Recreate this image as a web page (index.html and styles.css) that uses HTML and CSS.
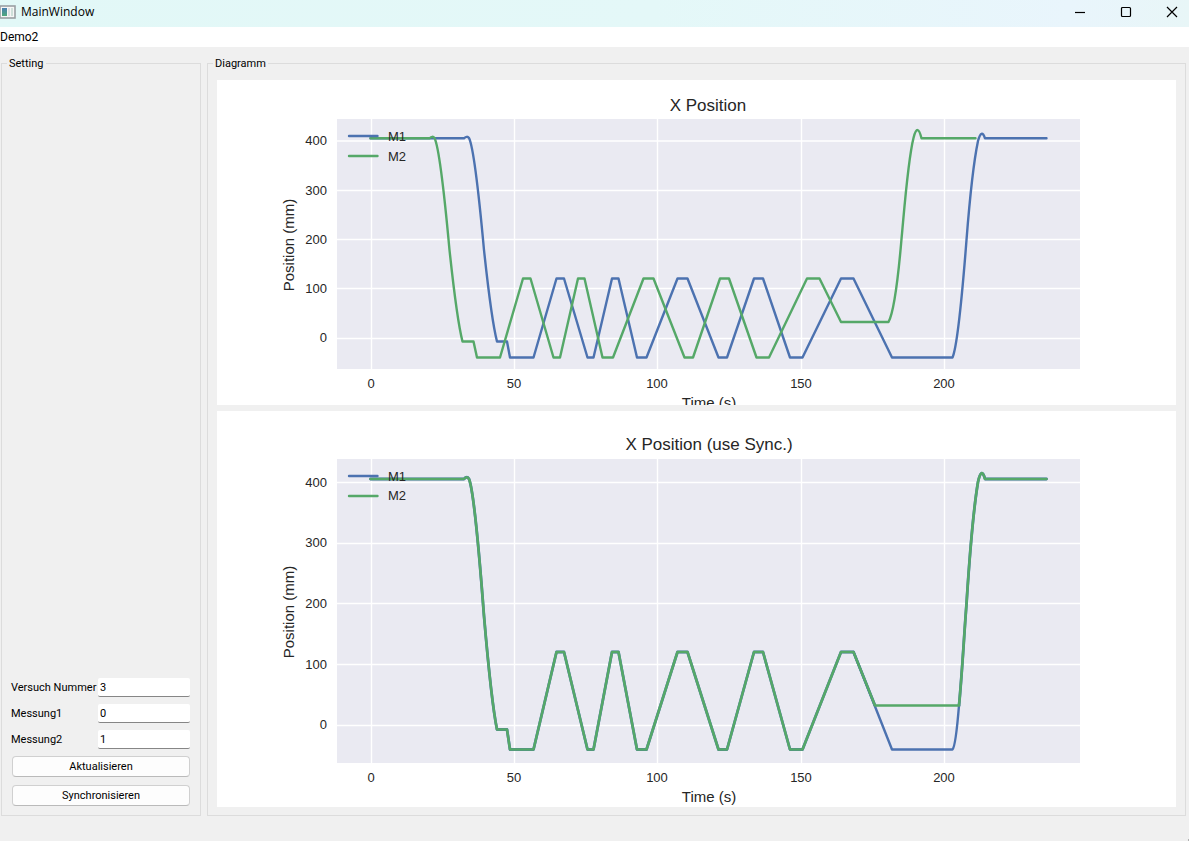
FILE: index.html
```
<!DOCTYPE html>
<html lang="de">
<head>
<meta charset="utf-8">
<title>MainWindow</title>
<link rel="stylesheet" href="styles.css">
</head>
<body>
<header class="titlebar">
  <svg class="app-icon" viewBox="0 0 16 14" aria-hidden="true">
    <defs><linearGradient id="pane" x1="0" y1="0" x2="0" y2="1"><stop offset="0" stop-color="#4a7fb0"/><stop offset="1" stop-color="#4fa87c"/></linearGradient></defs>
    <rect x="0" y="1" width="15" height="12" fill="#f6f6f6" stroke="#9a9fa3" stroke-width="1.6"/>
    <rect x="2" y="3" width="5" height="8" fill="url(#pane)"/>
    <rect x="8" y="3" width="2" height="8" fill="#dcdfe2"/>
    <rect x="11" y="3" width="2" height="8" fill="#cfe0da"/>
  </svg>
  <h1 class="window-title">MainWindow</h1>
  <div class="window-controls">
    <button class="window-button" type="button" aria-label="Minimize"><svg viewBox="0 0 12 12"><path d="M1 6.500H11"/></svg></button>
    <button class="window-button" type="button" aria-label="Maximize"><svg viewBox="0 0 12 12"><rect x="1.500" y="1.500" width="9" height="9" rx="1"/></svg></button>
    <button class="window-button" type="button" aria-label="Close"><svg viewBox="0 0 12 12"><path d="M1 1L11 11M11 1L1 11"/></svg></button>
  </div>
</header>
<nav class="menubar"><a class="menu-item" href="#">Demo2</a></nav>
<main class="workspace">
  <fieldset class="group">
    <legend class="group-title">Setting</legend>
    <form class="settings">
      <div class="fields">
        <label for="versuch">Versuch Nummer</label><input class="field" id="versuch" type="text" value="3">
        <label for="messung1">Messung1</label><input class="field" id="messung1" type="text" value="0">
        <label for="messung2">Messung2</label><input class="field" id="messung2" type="text" value="1">
      </div>
      <button class="action" type="button">Aktualisieren</button>
      <button class="action" type="button">Synchronisieren</button>
    </form>
  </fieldset>
  <fieldset class="group">
    <legend class="group-title">Diagramm</legend>
    <div class="charts">
      <svg class="chart chart-raw" viewBox="217 80 959 325" role="img" aria-label="X Position">
        <rect class="plot" x="337" y="119" width="743" height="250"/>
        <path class="grid" d="M337 141H1080M337 190.500H1080M337 239.500H1080M337 288.500H1080M337 338.500H1080M371.500 119V369M514.500 119V369M657.500 119V369M801.500 119V369M944.500 119V369"/>
        <text class="title" x="708" y="111">X Position</text>
        <g class="tick tick-y"><text x="327" y="145">400</text><text x="327" y="195">300</text><text x="327" y="244">200</text><text x="327" y="293">100</text><text x="327" y="342">0</text></g>
        <g class="tick"><text x="371" y="388">0</text><text x="514" y="388">50</text><text x="657" y="388">100</text><text x="801" y="388">150</text><text x="944" y="388">200</text></g>
        <text class="axis" x="709" y="408">Time (s)</text>
        <text class="axis" transform="translate(294 245) rotate(-90)">Position (mm)</text>
        <path class="line m1" d="M370.500 138.300H464Q467 135.500 469 138C473 146 478.500 190 484 250C487 278 492 322 497 341.500H507L510 357.500H533.500L556.500 278.500H564L587.500 357.500H593.500L612 278.500H618.500L637 357.500H646.500L677.500 278.500H687.500L718.500 357.500H727L754 278.500H763L790 357.500H802.500L841 278.500H853.500L892 357.500H952.500C958 345 963 285 966.500 240C970 195 973 165 978 141Q981.500 128 985 138.300H1046.500"/>
        <path class="line m2" d="M370.500 138.300H429.500Q432.500 135.500 434.500 138C438.500 146 444 190 449.500 250C452.500 278 457.500 322 462.500 341.500H473.500L477 357.500H500L523 278.500H530.500L553.500 357.500H560L578 278.500H584.500L602.500 357.500H613L643.500 278.500H653.500L684.500 357.500H693L720 278.500H729L756.500 357.500H769L807 278.500H819.500L841 322H888.500C894 312 898 280 901.500 239C904.500 207 908 160 913.500 138Q917.500 122 921.500 138.300H975.500"/>
        <path class="line m1" d="M349 136H377.500"/><path class="line m2" d="M349 156H377.500"/>
        <g class="legend"><text x="388" y="141">M1</text><text x="388" y="161">M2</text></g>
      </svg>
      <svg class="chart chart-sync" viewBox="217 411 959 396" role="img" aria-label="X Position (use Sync.)">
        <rect class="plot" x="337" y="459" width="743" height="304"/>
        <path class="grid" d="M337 482.500H1080M337 543.500H1080M337 603.500H1080M337 664.500H1080M337 725.500H1080M371.500 459V763M514.500 459V763M657.500 459V763M801.500 459V763M944.500 459V763"/>
        <text class="title" x="709" y="450">X Position (use Sync.)</text>
        <g class="tick tick-y"><text x="327" y="487">400</text><text x="327" y="547">300</text><text x="327" y="608">200</text><text x="327" y="669">100</text><text x="327" y="729">0</text></g>
        <g class="tick"><text x="371" y="782">0</text><text x="514" y="782">50</text><text x="657" y="782">100</text><text x="801" y="782">150</text><text x="944" y="782">200</text></g>
        <text class="axis" x="709" y="802">Time (s)</text>
        <text class="axis" transform="translate(294 612) rotate(-90)">Position (mm)</text>
        <path class="line m1" d="M853.500 652L892 749.500H952.500C955 747 957 730 959 705.500"/>
        <path class="line m1 overlap" d="M370.500 479H464Q467 475.500 469 479C473 489 478.500 543 484 616C487 651 492 705 497 729.500H507L510 749.500H533.500L556.500 652H564L587.500 749.500H593.500L612 652H618.500L637 749.500H646.500L677.500 652H687.500L718.500 749.500H727L754 652H763L790 749.500H802.500L841 652H853.500L875 705.500M959 705.500C962 675 964 636 966.500 604C970 549 973 512 978 482Q981.500 466 985 479H1046.500"/>
        <path class="line m2 sync" d="M370.500 479H464Q467 475.500 469 479C473 489 478.500 543 484 616C487 651 492 705 497 729.500H507L510 749.500H533.500L556.500 652H564L587.500 749.500H593.500L612 652H618.500L637 749.500H646.500L677.500 652H687.500L718.500 749.500H727L754 652H763L790 749.500H802.500L841 652H853.500L875 705.500H959C962 675 964 636 966.500 604C970 549 973 512 978 482Q981.500 466 985 479H1046.500"/>
        <path class="line m1" d="M349 476H377.500"/><path class="line m2" d="M349 496H377.500"/>
        <g class="legend"><text x="388" y="481">M1</text><text x="388" y="500">M2</text></g>
      </svg>
    </div>
  </fieldset>
</main>
<footer class="statusbar"><span class="grip"></span></footer>
</body>
</html>
```
FILE: styles.css
```
* {
  box-sizing: border-box;
}

body {
  margin: 0;
  min-height: 100vh;
  display: flex;
  flex-direction: column;
  background: #f0f0f0;
  color: #000;
  font: 11px/13px Roboto, "Open Sans", sans-serif;
}

.titlebar {
  display: flex;
  align-items: center;
  height: 27px;
  padding-bottom: 4px;
  background: linear-gradient(90deg, #e2f8f7, #e4f8f8 55%, #e9f5fc 90%, #e8f6f7);
}

.app-icon {
  width: 16px;
  height: 14px;
}

.window-title {
  margin: 0 0 0 5px;
  font-family: "Open Sans", "Noto Sans", sans-serif;
  font-size: 12px;
  font-weight: 400;
  line-height: 16px;
}

.window-controls {
  display: flex;
  align-self: stretch;
  margin-left: auto;
}

.window-button {
  display: grid;
  place-items: center;
  width: 46px;
  padding: 0 0 0 12px;
  border: 0;
  background: none;
}

.window-button svg {
  width: 12px;
  height: 12px;
  fill: none;
  stroke: #000;
  stroke-width: 1.2;
}

.menubar {
  height: 20px;
  padding-top: 4px;
  background: #fff;
}

.menu-item {
  display: inline-block;
  color: #000;
  font-size: 12px;
  text-decoration: none;
}

.workspace {
  flex: 1;
  display: grid;
  grid-template-columns: 200px minmax(0, 1fr);
  gap: 6px;
  padding: 10px 3px 0 1px;
}

.group {
  display: flex;
  min-width: 0;
  margin: 0;
  padding: 0;
  border: 1px solid #dcdcdc;
}

.group-title {
  margin-left: 5px;
  padding: 0 2px;
}

.settings {
  flex: 1;
  display: flex;
  flex-direction: column;
  justify-content: flex-end;
  gap: 7px;
  min-width: 0;
  padding: 0 10px 9px 9px;
}

.fields {
  display: grid;
  grid-template-columns: minmax(0, 1fr) 92px;
  align-items: center;
  gap: 7px 0;
  white-space: nowrap;
}

.field {
  width: 100%;
  height: 19px;
  padding: 0 2px;
  border: 0;
  border-bottom: 1px solid #868686;
  border-radius: 2px;
  background: #fff;
  color: #000;
  font: inherit;
}

.action {
  height: 21px;
  margin-left: 1px;
  padding: 0;
  border: 1px solid #d0d0d0;
  border-bottom-color: #bababa;
  border-radius: 4px;
  background: #fdfdfd;
  color: #000;
  font: inherit;
}

.action + .action {
  margin-top: 1px;
}

.charts {
  flex: 1;
  display: flex;
  flex-direction: column;
  gap: 6px;
  min-width: 0;
  padding: 10px 9px 8px;
}

.chart {
  width: 100%;
  min-height: 0;
  background: #fff;
}

.chart-raw {
  flex: 325 1 0;
}

.chart-sync {
  flex: 396 1 0;
}

.chart text {
  fill: #262626;
  font-family: "Liberation Sans", Arial, sans-serif;
  text-anchor: middle;
}

.plot {
  fill: #eaeaf2;
}

.grid {
  stroke: #fff;
  stroke-width: 1.4;
}

.chart .title {
  font-size: 17px;
}

.chart .axis {
  font-size: 15px;
}

.chart .tick text,
.chart .legend text {
  font-size: 13px;
}

.chart .tick-y text {
  text-anchor: end;
}

.chart .legend text {
  text-anchor: start;
}

.line {
  fill: none;
  stroke-width: 2.4;
  stroke-linecap: round;
  stroke-linejoin: round;
}

.m1 {
  stroke: #4c72b0;
}

.m2 {
  stroke: #55a868;
}

.overlap {
  stroke-width: 2.8;
}

.sync {
  stroke-width: 2.6;
}

.statusbar {
  display: flex;
  align-items: flex-end;
  justify-content: flex-end;
  height: 25px;
}

.grip {
  width: 1px;
  height: 2px;
  background: #b0b0b0;
}
```
